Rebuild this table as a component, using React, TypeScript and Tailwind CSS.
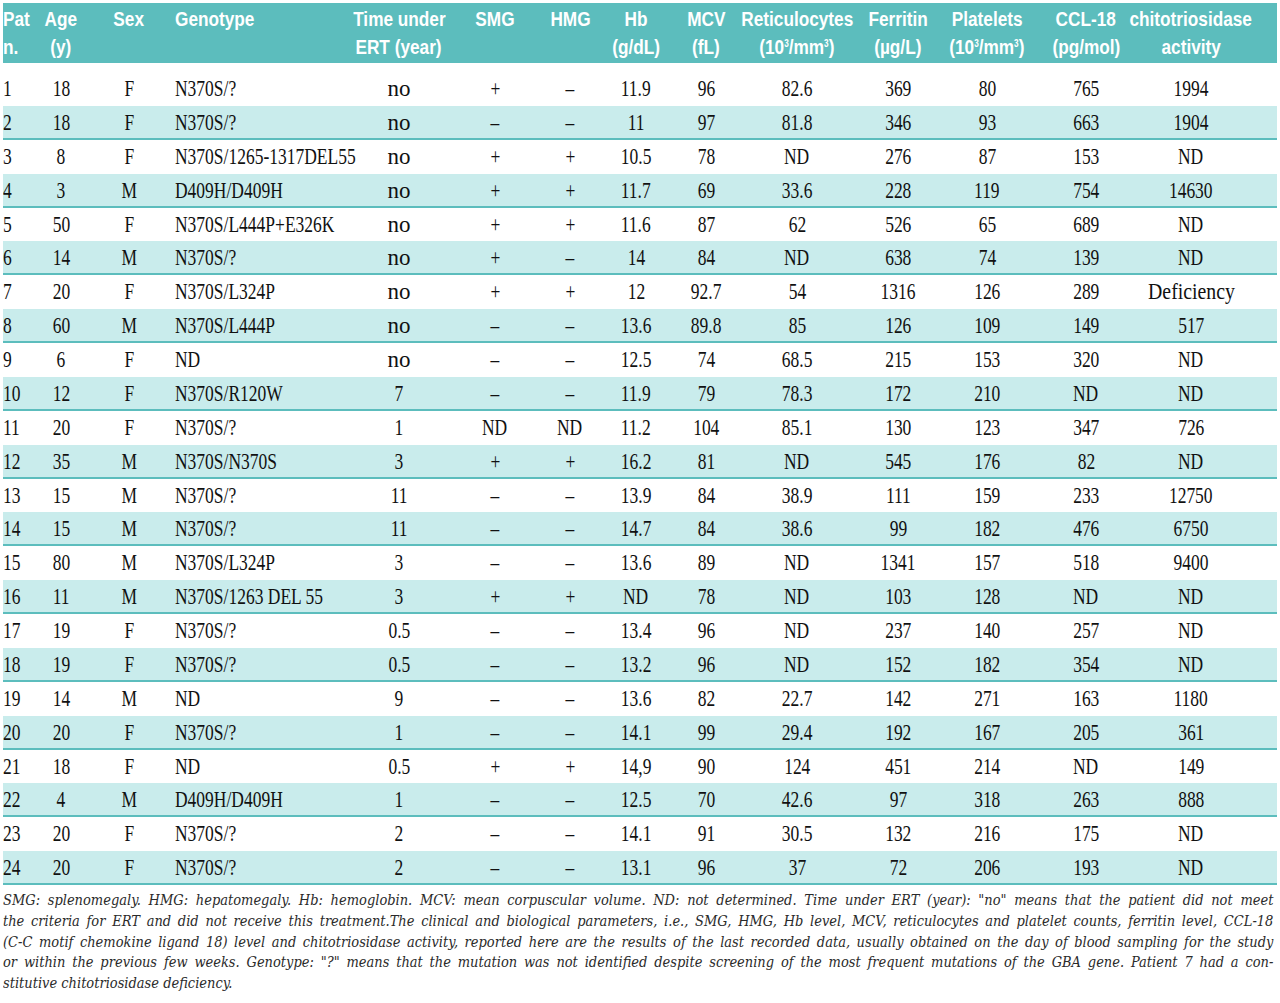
import type { ReactNode } from "react";

const COLS =
  "grid grid-cols-[36px_44px_92px_177px_94px_98px_52px_80px_60px_122px_80px_98px_100px_110px_1fr]";

type Row = string[];

const rows: Row[] = [
  ["1", "18", "F", "N370S/?", "no", "+", "–", "11.9", "96", "82.6", "369", "80", "765", "1994"],
  ["2", "18", "F", "N370S/?", "no", "–", "–", "11", "97", "81.8", "346", "93", "663", "1904"],
  ["3", "8", "F", "N370S/1265-1317DEL55", "no", "+", "+", "10.5", "78", "ND", "276", "87", "153", "ND"],
  ["4", "3", "M", "D409H/D409H", "no", "+", "+", "11.7", "69", "33.6", "228", "119", "754", "14630"],
  ["5", "50", "F", "N370S/L444P+E326K", "no", "+", "+", "11.6", "87", "62", "526", "65", "689", "ND"],
  ["6", "14", "M", "N370S/?", "no", "+", "–", "14", "84", "ND", "638", "74", "139", "ND"],
  ["7", "20", "F", "N370S/L324P", "no", "+", "+", "12", "92.7", "54", "1316", "126", "289", "Deficiency"],
  ["8", "60", "M", "N370S/L444P", "no", "–", "–", "13.6", "89.8", "85", "126", "109", "149", "517"],
  ["9", "6", "F", "ND", "no", "–", "–", "12.5", "74", "68.5", "215", "153", "320", "ND"],
  ["10", "12", "F", "N370S/R120W", "7", "–", "–", "11.9", "79", "78.3", "172", "210", "ND", "ND"],
  ["11", "20", "F", "N370S/?", "1", "ND", "ND", "11.2", "104", "85.1", "130", "123", "347", "726"],
  ["12", "35", "M", "N370S/N370S", "3", "+", "+", "16.2", "81", "ND", "545", "176", "82", "ND"],
  ["13", "15", "M", "N370S/?", "11", "–", "–", "13.9", "84", "38.9", "111", "159", "233", "12750"],
  ["14", "15", "M", "N370S/?", "11", "–", "–", "14.7", "84", "38.6", "99", "182", "476", "6750"],
  ["15", "80", "M", "N370S/L324P", "3", "–", "–", "13.6", "89", "ND", "1341", "157", "518", "9400"],
  ["16", "11", "M", "N370S/1263 DEL 55", "3", "+", "+", "ND", "78", "ND", "103", "128", "ND", "ND"],
  ["17", "19", "F", "N370S/?", "0.5", "–", "–", "13.4", "96", "ND", "237", "140", "257", "ND"],
  ["18", "19", "F", "N370S/?", "0.5", "–", "–", "13.2", "96", "ND", "152", "182", "354", "ND"],
  ["19", "14", "M", "ND", "9", "–", "–", "13.6", "82", "22.7", "142", "271", "163", "1180"],
  ["20", "20", "F", "N370S/?", "1", "–", "–", "14.1", "99", "29.4", "192", "167", "205", "361"],
  ["21", "18", "F", "ND", "0.5", "+", "+", "14,9", "90", "124", "451", "214", "ND", "149"],
  ["22", "4", "M", "D409H/D409H", "1", "–", "–", "12.5", "70", "42.6", "97", "318", "263", "888"],
  ["23", "20", "F", "N370S/?", "2", "–", "–", "14.1", "91", "30.5", "132", "216", "175", "ND"],
  ["24", "20", "F", "N370S/?", "2", "–", "–", "13.1", "96", "37", "72", "206", "193", "ND"],
];

const notes = [
  'SMG: splenomegaly. HMG: hepatomegaly. Hb: hemoglobin. MCV: mean corpuscular volume. ND: not determined. Time under ERT (year): "no" means that the patient did not meet',
  "the criteria for ERT and did not receive this treatment.The clinical and biological parameters, i.e., SMG, HMG, Hb level, MCV, reticulocytes and platelet counts, ferritin level, CCL-18",
  "(C-C motif chemokine ligand 18) level and chitotriosidase activity, reported here are the results of the last recorded data, usually obtained on the day of blood sampling for the study",
  'or within the previous few weeks. Genotype: "?" means that the mutation was not identified despite screening of the most frequent mutations of the GBA gene. Patient 7 had a con-',
];

function Head({ lines, left }: { lines: ReactNode[]; left?: boolean }) {
  return (
    <div>
      {lines.map((l, i) => (
        <div key={i} className={`flex ${left ? "justify-start" : "justify-center"}`}>
          <span className={`shrink-0 inline-block scale-x-[0.82] ${left ? "origin-left" : "origin-center"}`}>{l}</span>
        </div>
      ))}
    </div>
  );
}

const cube = <sup className="text-[10px] -top-[7px]">3</sup>;

function Cell({ value, left }: { value: string; left?: boolean }) {
  if (value === "no") {
    return <div className="flex justify-center">{value}</div>;
  }
  const scale = value === "Deficiency" ? "scale-x-[0.86]" : "scale-x-[0.76]";
  return (
    <div className={`flex ${left ? "justify-start" : "justify-center"}`}>
      <span className={`shrink-0 inline-block whitespace-nowrap ${scale} ${left ? "origin-left" : "origin-center"}`}>
        {value}
      </span>
    </div>
  );
}

export default function App() {
  return (
    <div className="w-[1280px] h-[1003px] bg-white px-[3px] pt-[3px] overflow-hidden">
      {/* header */}
      <div
        className={`${COLS} h-[60px] bg-[#5cbdbd] pt-[2px] text-white font-bold text-[21px] leading-[28px] font-['Liberation_Sans',sans-serif] whitespace-nowrap`}
      >
        <Head left lines={["Pat", "n."]} />
        <Head lines={["Age", "(y)"]} />
        <Head lines={["Sex"]} />
        <Head left lines={["Genotype"]} />
        <Head lines={["Time under", "ERT (year)"]} />
        <Head lines={["SMG"]} />
        <Head lines={["HMG"]} />
        <Head lines={["Hb", "(g/dL)"]} />
        <Head lines={["MCV", "(fL)"]} />
        <Head lines={["Reticulocytes", <>(10{cube}/mm{cube})</>]} />
        <Head lines={["Ferritin", "(µg/L)"]} />
        <Head lines={["Platelets", <>(10{cube}/mm{cube})</>]} />
        <Head lines={["CCL-18", "(pg/mol)"]} />
        <Head lines={["chitotriosidase", "activity"]} />
        <div />
      </div>

      {/* body */}
      <div className="pt-[9px] text-[23px] text-[#111] font-['Liberation_Serif',serif]">
        {rows.map((r, i) => (
          <div
            key={r[0]}
            className={`${COLS} h-[33.875px] items-center ${
              i % 2 === 1 ? "bg-[#c9ecec] border-b-2 border-[#5cbdbd]" : "bg-white"
            }`}
          >
            {r.map((v, j) => (
              <Cell key={j} value={v} left={j === 0 || j === 3} />
            ))}
            <div />
          </div>
        ))}
      </div>

      {/* footnote */}
      <div className="mt-[5px] w-[1366px] origin-left scale-x-[0.93] text-[14px] leading-[20.8px] italic text-[#2a2a2a] font-['DejaVu_Serif',serif]">
        {notes.map((n) => (
          <div key={n} className="text-justify [text-align-last:justify]">
            {n}
          </div>
        ))}
        <div>stitutive chitotriosidase deficiency.</div>
      </div>
    </div>
  );
}
